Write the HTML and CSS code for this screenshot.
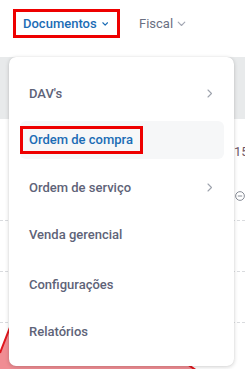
FILE: index.html
```html
<!DOCTYPE html>
<html lang="pt">
<head>
<meta charset="utf-8">
<link rel="stylesheet" href="styles.css">
</head>
<body>
<div class="page">
  <nav class="topnav">
    <div class="nav-item active outlined">
      <span>Documentos</span>
      <svg class="caret" width="9" height="6" viewBox="0 0 9 6"><path d="M1.2 1.2 L4.5 4.5 L7.8 1.2" fill="none" stroke="currentColor" stroke-width="1.6" stroke-linecap="round" stroke-linejoin="round"/></svg>
    </div>
    <div class="nav-item">
      <span>Fiscal</span>
      <svg class="caret" width="9" height="6" viewBox="0 0 9 6"><path d="M1.2 1.2 L4.5 4.5 L7.8 1.2" fill="none" stroke="currentColor" stroke-width="1.1" stroke-linecap="round" stroke-linejoin="round"/></svg>
    </div>
  </nav>
  <main class="content">
    <div class="band"></div>
    <div class="row row-a"><span class="num">15</span></div>
    <div class="row row-b"><svg class="circ" width="16" height="16" viewBox="0 0 16 16"><circle cx="8" cy="8" r="7" fill="none" stroke="#6e7480" stroke-width="1.3"/><path d="M4.5 8 H11.5" stroke="#6e7480" stroke-width="1.3"/></svg></div>
    <div class="row row-c"></div>
    <div class="row row-d"></div>
    <div class="chart">
      <svg width="245" height="47" viewBox="0 0 245 47"><path d="M0 30 L14 -6 L100 -20 L200 50 L0 50 Z" fill="#f08d93"/><path d="M0 30 L14 -6 L100 -20 L200 50" fill="none" stroke="#e0161d" stroke-width="2"/></svg>
    </div>
  </main>
  <div class="menu">
    <div class="menu-item"><span>DAV's</span><svg class="chev" width="6" height="9" viewBox="0 0 6 9"><path d="M1 1 L4.5 4.5 L1 8" fill="none" stroke="#9ea3ad" stroke-width="1.1" stroke-linecap="round" stroke-linejoin="round"/></svg></div>
    <div class="menu-item hover"><span class="outlined-sm">Ordem de compra</span></div>
    <div class="menu-item"><span>Ordem de serviço</span><svg class="chev" width="6" height="9" viewBox="0 0 6 9"><path d="M1 1 L4.5 4.5 L1 8" fill="none" stroke="#9ea3ad" stroke-width="1.1" stroke-linecap="round" stroke-linejoin="round"/></svg></div>
    <div class="menu-item"><span>Venda gerencial</span></div>
    <div class="menu-item gap"><span>Configurações</span></div>
    <div class="menu-item"><span>Relatórios</span></div>
  </div>
</div>
</body>
</html>
```

FILE: styles.css
```css
* { box-sizing: border-box; }
html, body { margin: 0; padding: 0; background: #fff; }
body { font-family: Roboto, "Liberation Sans", sans-serif; width: 245px; height: 369px; overflow: hidden; }
.page { position: relative; width: 245px; height: 369px; overflow: hidden; }

.topnav { height: 57px; display: flex; align-items: flex-start; padding: 9px 0 0 13px; }
.nav-item { display: flex; align-items: center; gap: 5px; font-size: 13px; color: #6a6f82; height: 29px; }
.nav-item .caret { color: #a3a7b3; margin-top: 1px; }
.nav-item.active { color: #1b6cb5; font-weight: 500; }
.nav-item.active .caret { color: #1b6cb5; }
.outlined { border: 3px solid #ee0000; padding: 0 9px 0 7px; width: 107px; }
.nav-item + .nav-item { margin-left: 19px; gap: 4px; }

.content { display: flex; flex-direction: column; }
.band { height: 62px; background: #e8eaeb; }
.row { height: 51px; border-bottom: 1px dashed #d9dbde; display: flex; align-items: center; padding-left: 234px; }
.row-a { border-bottom: none; height: 52px; align-items: flex-end; padding-bottom: 12px; }
.num { font-size: 13px; color: #6d5566; }
.row-b { height: 50px; padding-left: 235px; }
.chart { height: 47px; }
.chart svg { display: block; }

.menu { position: absolute; left: 9px; top: 57px; width: 225px; height: 309px; background: #fff; border-radius: 7px; box-shadow: 0 1px 4px rgba(0,0,0,0.18), 0 0 1px rgba(0,0,0,0.12); padding: 17px 10px 0 11px; display: flex; flex-direction: column; gap: 9px; }
.menu-item { height: 38px; display: flex; align-items: center; justify-content: space-between; padding: 0 11px 0 9px; font-size: 13px; font-weight: 500; color: #5e6378; border-radius: 6px; }
.menu-item.hover { background: #f6f7f8; color: #1b6cb5; padding-left: 0; }
.outlined-sm { border: 3px solid #ee0000; padding: 3px 7px 3px 6px; line-height: 16px; }
.menu-item.gap { margin-top: 3px; }
```
